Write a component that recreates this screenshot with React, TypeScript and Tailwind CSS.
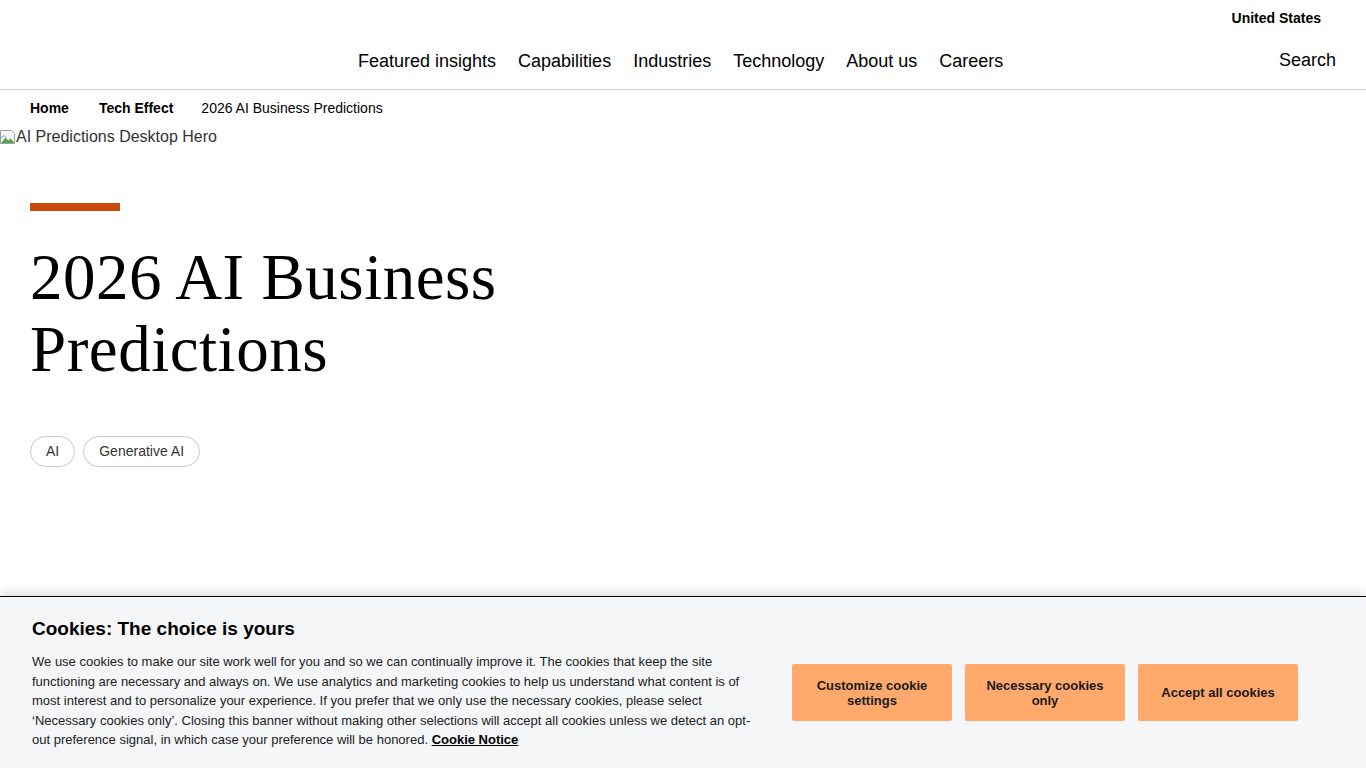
import React from 'react'

const navItems = ['Featured insights', 'Capabilities', 'Industries', 'Technology', 'About us', 'Careers']

function BrokenImage() {
  return (
    <svg width="16" height="16" viewBox="0 0 16 16" className="shrink-0">
      <path d="M0.5 1.5h11l3 3v10h-14z" fill="#f4f4f4" stroke="#a0a0a0" strokeWidth="1" />
      <path d="M1 14l4.5-5.5 3 3 2-2 4 4.5z" fill="#55a84a" />
      <path d="M1 9l3-2.5 2 2" fill="none" stroke="#6b9bd0" strokeWidth="1" />
    </svg>
  )
}

export default function App() {
  return (
    <div className="relative min-h-[768px] bg-white text-black font-['Liberation_Sans',Arial,sans-serif]">
      {/* header */}
      <header className="border-b border-[#d0d0d0]">
        <div className="flex justify-end pr-[45px] pt-[10px] h-[26px]">
          <span className="text-[14px] font-bold leading-[16px]">United States</span>
        </div>
        <div className="flex items-center h-[63px] pt-[7px]">
          <nav className="flex gap-[22px] ml-[358px]">
            {navItems.map(n => (
              <a key={n} className="text-[18px] leading-[22px] text-black">{n}</a>
            ))}
          </nav>
          <span className="ml-auto mr-[30px] text-[18px] leading-[22px] -mt-[2px]">Search</span>
        </div>
      </header>

      {/* breadcrumb */}
      <div className="flex items-center gap-[30px] pl-[30px] h-[36px] text-[14px]">
        <span className="font-bold">Home</span>
        <span className="font-bold">Tech Effect</span>
        <span className="-ml-[2px]">2026 AI Business Predictions</span>
      </div>

      {/* broken hero image */}
      <div className="flex items-center h-[18px] text-[16px] text-[#333] mt-[2px]">
        <BrokenImage />
        <span className="leading-[18px]">AI Predictions Desktop Hero</span>
      </div>

      {/* hero */}
      <section className="pl-[30px] pt-[57px]">
        <div className="w-[90px] h-[8px] bg-[#c94a0a]" />
        <h1 className="mt-[30px] text-[65px] leading-[72px] tracking-[0.5px] font-normal font-['Liberation_Serif',Georgia,serif] w-[540px]">
          2026 AI Business Predictions
        </h1>
        <div className="flex gap-[8px] mt-[51px]">
          <span className="h-[31px] px-[15px] flex items-center rounded-full border border-[#c8c8c8] text-[14px] text-[#333]">AI</span>
          <span className="h-[31px] px-[15px] flex items-center rounded-full border border-[#c8c8c8] text-[14px] text-[#333]">Generative AI</span>
        </div>
      </section>

      {/* cookie banner */}
      <div className="absolute left-0 right-0 bottom-0 h-[172px] bg-[#f4f6f8] border-t border-black shadow-[0_-4px_10px_rgba(0,0,0,0.12)] flex">
        <div className="w-[760px] pl-[32px] pt-[20px]">
          <h2 className="text-[19px] font-bold leading-[24px]">Cookies: The choice is yours</h2>
          <p className="mt-[11px] w-[724px] text-[13px] leading-[19.5px] text-[#222]">
            We use cookies to make our site work well for you and so we can continually improve it. The cookies that keep the site functioning are necessary and always on. We use analytics and marketing cookies to help us understand what content is of most interest and to personalize your experience. If you prefer that we only use the necessary cookies, please select ‘Necessary cookies only’. Closing this banner without making other selections will accept all cookies unless we detect an opt-out preference signal, in which case your preference will be honored.{' '}
            <a className="font-bold underline text-black">Cookie Notice</a>
          </p>
        </div>
        <div className="flex gap-[13px] ml-[32px] mt-[67px] h-[57px]">
          {['Customize cookie settings', 'Necessary cookies only', 'Accept all cookies'].map(b => (
            <button key={b} className="w-[160px] h-[57px] rounded-[2px] bg-[#ffa96d] text-[13px] font-bold leading-[15px] text-[#1a1a1a] px-[18px]">
              {b}
            </button>
          ))}
        </div>
      </div>
    </div>
  )
}
